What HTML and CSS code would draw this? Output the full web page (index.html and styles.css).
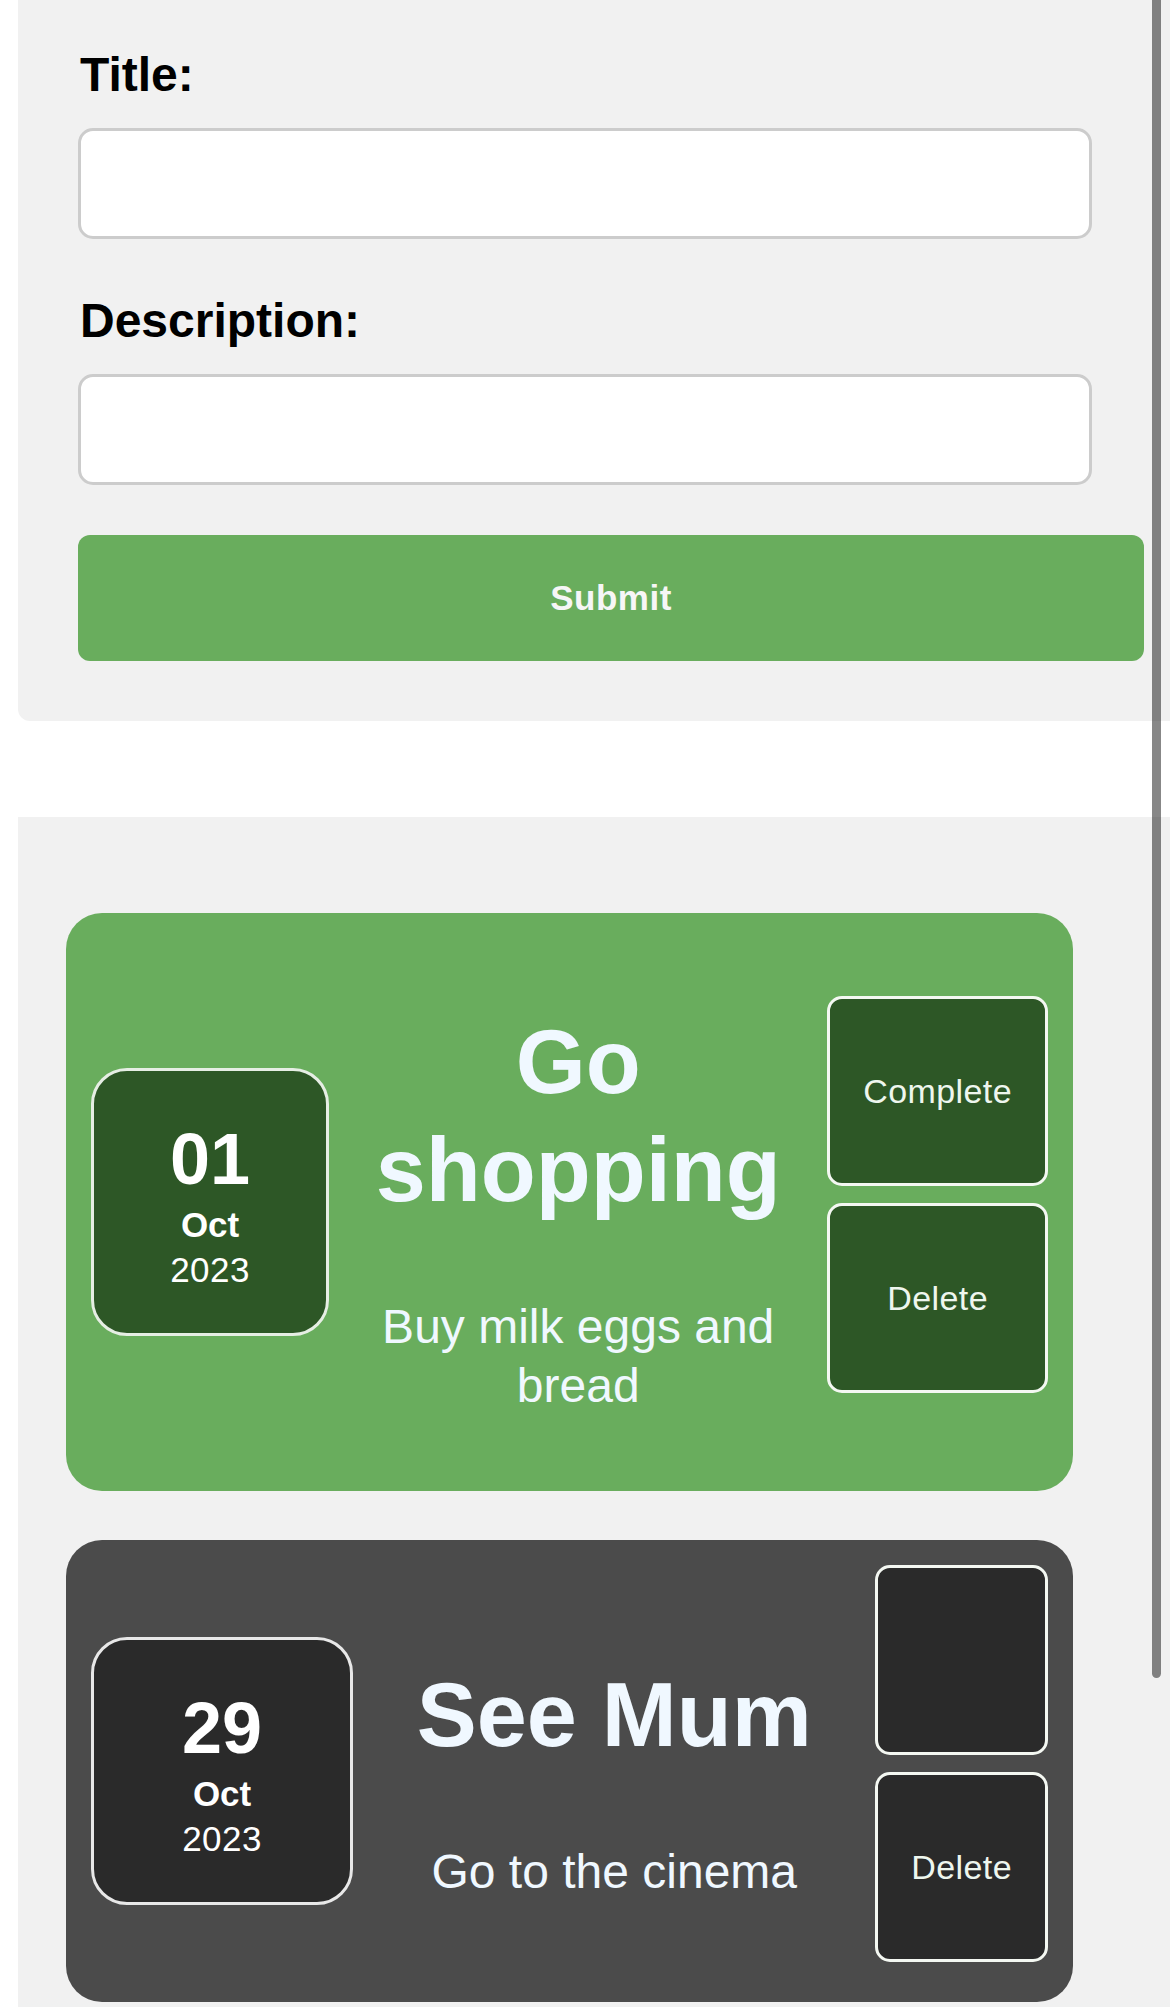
FILE: index.html
```html
<!DOCTYPE html>
<html lang="en">
<head>
<meta charset="utf-8">
<title>Todos</title>
<link rel="stylesheet" href="styles.css">
</head>
<body>
<section class="form-panel">
  <form class="todo-form">
    <label class="field-label" for="title">Title:</label>
    <input class="field-input" id="title" type="text">
    <label class="field-label field-label--next" for="desc">Description:</label>
    <input class="field-input" id="desc" type="text">
    <button class="submit-btn" type="button">Submit</button>
  </form>
</section>

<section class="list-panel">
  <article class="todo-card todo-card--open">
    <div class="date-box">
      <div class="date-day">01</div>
      <div class="date-month">Oct</div>
      <div class="date-year">2023</div>
    </div>
    <div class="todo-text">
      <h1 class="todo-title">Go shopping</h1>
      <p class="todo-desc">Buy milk eggs and bread</p>
    </div>
    <div class="todo-actions">
      <button class="action-btn" type="button">Complete</button>
      <button class="action-btn" type="button">Delete</button>
    </div>
  </article>

  <article class="todo-card todo-card--done">
    <div class="date-box">
      <div class="date-day">29</div>
      <div class="date-month">Oct</div>
      <div class="date-year">2023</div>
    </div>
    <div class="todo-text">
      <h1 class="todo-title">See Mum</h1>
      <p class="todo-desc">Go to the cinema</p>
    </div>
    <div class="todo-actions">
      <button class="action-btn" type="button"></button>
      <button class="action-btn" type="button">Delete</button>
    </div>
  </article>
</section>

<div class="scrollbar"></div>
</body>
</html>
```

FILE: styles.css
```css
* {
  box-sizing: border-box;
}

html, body {
  margin: 0;
  padding: 0;
  background: #ffffff;
  width: 1170px;
  height: 2007px;
  overflow: hidden;
  font-family: "Liberation Sans", Arial, sans-serif;
}

/* ---------- form panel ---------- */
.form-panel {
  margin-left: 18px;
  background: #f1f1f1;
  border-bottom-left-radius: 12px;
  padding: 51px 0 60px 60px;
}

.todo-form {
  display: flex;
  flex-direction: column;
  align-items: flex-start;
}

.field-label {
  font-size: 48px;
  font-weight: 700;
  line-height: 48px;
  color: #000;
  margin: 0 0 29px 2px;
}

.field-label--next {
  margin-top: 58px;
}

.field-input {
  width: 1014px;
  height: 111px;
  border: 3px solid #cccccc;
  border-radius: 15px;
  background: #ffffff;
  margin: 0;
  padding: 0 20px;
  font-size: 40px;
  outline: none;
}

.submit-btn {
  margin-top: 50px;
  width: 1066px;
  height: 126px;
  border: none;
  border-radius: 12px;
  background: #69ad5d;
  color: #f6f6f6;
  font-family: "Liberation Sans", Arial, sans-serif;
  font-size: 35px;
  font-weight: 700;
  letter-spacing: 0.5px;
  padding: 0;
}

/* ---------- list panel ---------- */
.list-panel {
  margin-top: 96px;
  margin-left: 18px;
  background: #f1f1f1;
  padding: 96px 97px 40px 48px;
  display: flex;
  flex-direction: column;
  gap: 49px;
}

.todo-card {
  display: flex;
  align-items: center;
  padding: 25px;
  border-radius: 36px;
}

.todo-card--open {
  background: #69ad5d;
}

.todo-card--done {
  background: #4b4b4b;
}

.date-box {
  flex: 1 1 140px;
  min-width: 0;
  border: 3px solid #e6eee4;
  border-radius: 36px;
  padding: 44px 0 40px;
  text-align: center;
  color: #ffffff;
}

.todo-card--open .date-box {
  background: #2d5726;
}

.todo-card--done .date-box {
  background: #2a2a2a;
  border-color: #e8e8e8;
}

.date-day {
  font-size: 72px;
  font-weight: 700;
  line-height: 88px;
}

.date-month {
  font-size: 35px;
  font-weight: 700;
  line-height: 43px;
}

.date-year {
  font-size: 35px;
  font-weight: 400;
  line-height: 47px;
  letter-spacing: 0.5px;
}

.todo-text {
  flex: 1 1 400px;
  min-width: 0;
  text-align: center;
  color: #f0f8ff;
}

.todo-title {
  margin: 70px 0 73px;
  font-size: 90px;
  font-weight: 700;
  line-height: 108px;
}

.todo-desc {
  margin: 0 0 51px;
  font-size: 48px;
  font-weight: 400;
  line-height: 59px;
}

.todo-actions {
  flex: 0 0 auto;
  display: flex;
  flex-direction: column;
  gap: 17px;
  margin-bottom: 15px;
}

.action-btn {
  height: 190px;
  padding: 0 33px;
  border: 3px solid #f4f8f2;
  border-radius: 15px;
  color: #eef6ee;
  font-family: "Liberation Sans", Arial, sans-serif;
  font-size: 34px;
  font-weight: 400;
  letter-spacing: 0.4px;
}

.todo-card--open .action-btn {
  background: #2d5726;
}

.todo-card--done .action-btn {
  background: #2a2a2a;
}

/* overlay scrollbar indicator */
.scrollbar {
  position: fixed;
  top: -10px;
  left: 1152px;
  width: 9px;
  height: 1688px;
  border-radius: 5px;
  background: rgba(0, 0, 0, 0.47);
}
```
